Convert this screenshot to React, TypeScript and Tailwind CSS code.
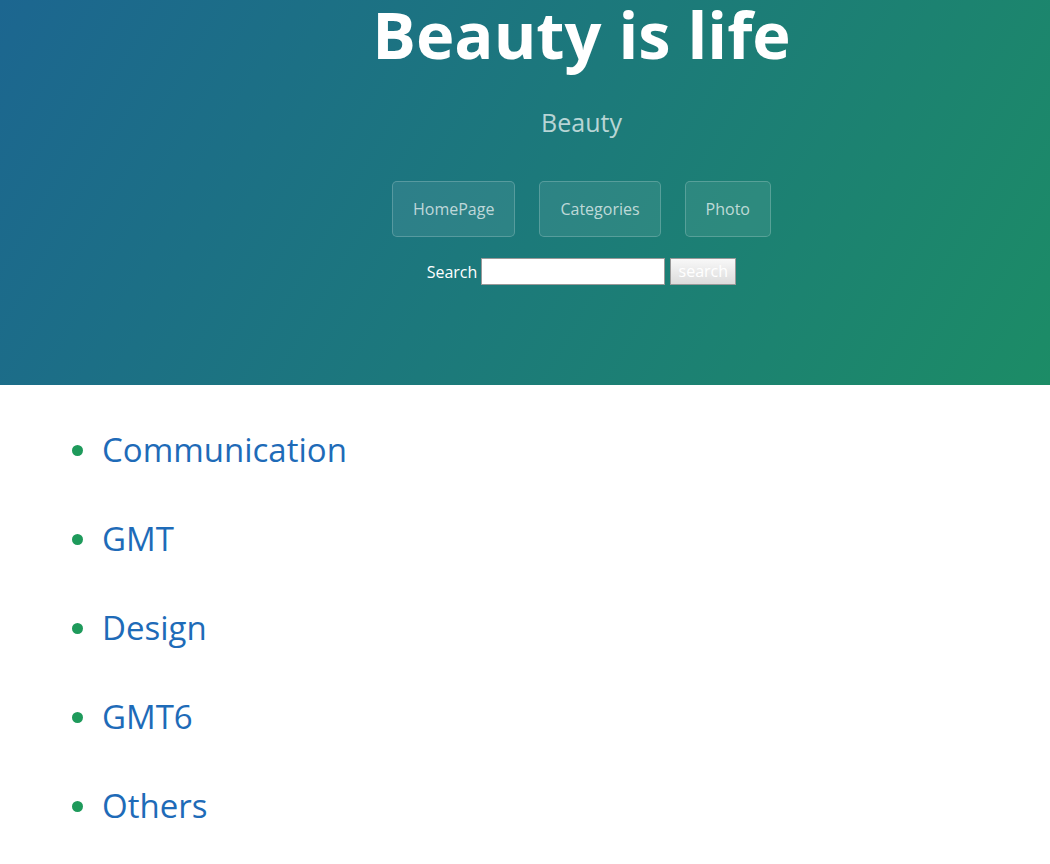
import React from 'react';

const navLinks = ['HomePage', 'Categories', 'Photo'];
const categories = ['Communication', 'GMT', 'Design', 'GMT6', 'Others'];

const App = () => {
  return (
    <div className="min-h-screen bg-white font-['Open_Sans',sans-serif]">
      <header className="bg-[linear-gradient(120deg,#1c6690,#1c8c66)] h-[385px] text-center">
        <h1 className="text-[65px] leading-[69px] font-bold text-white pl-[113px]">Beauty is life</h1>
        <h2 className="mt-[35px] text-[25px] leading-[36px] text-white/70 pl-[113px]">Beauty</h2>

        <nav className="mt-[41px] flex justify-center gap-6 pl-[113px]">
          {navLinks.map((link) => (
            <a
              key={link}
              href="#"
              className="px-5 py-[15px] text-base leading-6 text-white/70 bg-white/[0.08] border border-white/20 rounded-[5px]"
            >
              {link}
            </a>
          ))}
        </nav>

        <form className="mt-[21px] flex justify-center items-center pl-[113px]">
          <label className="text-[16px] text-white mr-[4px]">Search</label>
          <input
            type="text"
            className="w-[184px] h-[27px] bg-white border border-[#999]"
          />
          <button
            type="button"
            className="ml-[5px] w-[66px] h-[27px] bg-[linear-gradient(#f8f8f8,#dcdcdc)] border border-[#999] text-white text-[16px] leading-[25px]"
          >
            search
          </button>
        </form>
      </header>

      <ul className="pt-[41px] pl-[72px]">
        {categories.map((cat) => (
          <li key={cat} className="flex items-center gap-[19px] mb-[41px] h-[48px]">
            <span className="w-[11px] h-[11px] rounded-full bg-[#1e9a5b]" />
            <a href="#" className="text-[33px] leading-[48px] text-[#1e6bb8]">
              {cat}
            </a>
          </li>
        ))}
      </ul>
    </div>
  );
};

export default App;
